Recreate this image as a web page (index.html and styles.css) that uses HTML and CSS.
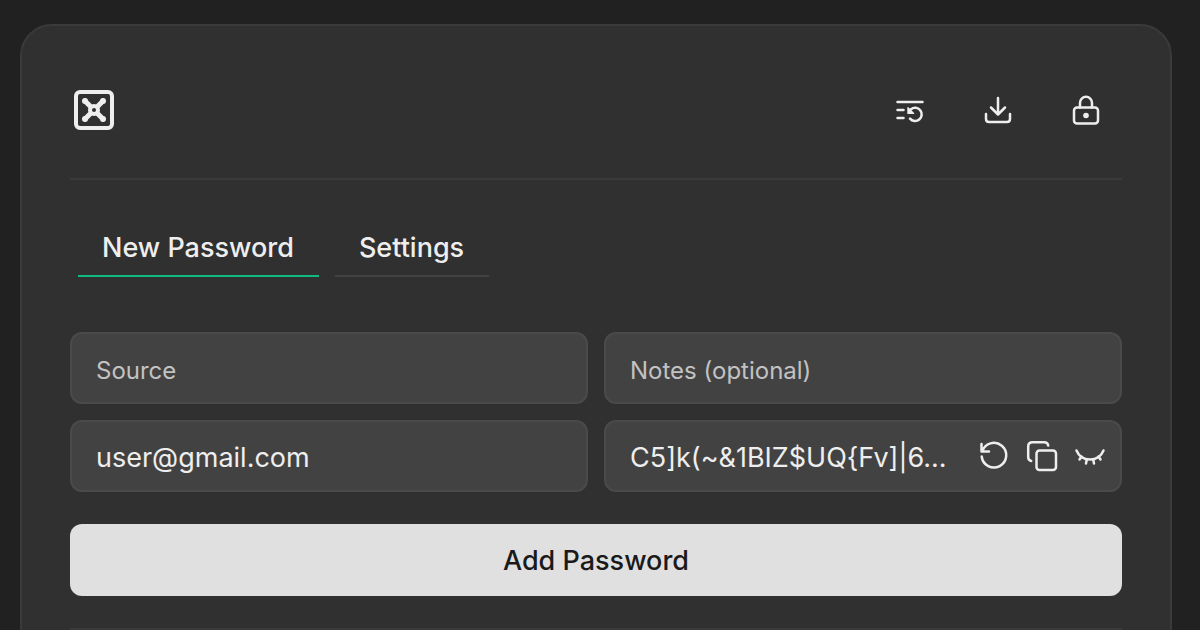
FILE: index.html
```html
<!DOCTYPE html>
<html lang="en">
<head>
<meta charset="utf-8">
<meta name="viewport" content="width=device-width, initial-scale=1">
<title>Password Manager</title>
<link rel="stylesheet" href="styles.css">
</head>
<body>
<main class="card">
  <header class="header">
    <svg class="logo" viewBox="0 0 40 40" aria-hidden="true">
      <rect x="2" y="2" width="36" height="36" rx="4" fill="none" stroke="currentColor" stroke-width="4"/>
      <path d="M11 11l18 18M29 11L11 29" fill="none" stroke="currentColor" stroke-width="5" stroke-linecap="round"/>
      <g fill="currentColor"><circle cx="11" cy="11" r="3"/><circle cx="29" cy="11" r="3"/><circle cx="11" cy="29" r="3"/><circle cx="29" cy="29" r="3"/><circle cx="20" cy="20" r="6"/></g>
      <circle class="logo-hole" cx="20" cy="20" r="2"/>
    </svg>
    <nav class="actions">
      <button class="action" type="button" aria-label="History">
        <svg class="icon" viewBox="0 0 32 32"><path d="M3.5 8h25M3.5 16h6M3.5 24h6"/><path d="M17 15.2A6.6 6.6 0 1 1 16 24.6"/><path d="M14 13.8v5.6h5.6z" fill="currentColor" stroke-width="1.4"/></svg>
      </button>
      <button class="action" type="button" aria-label="Download">
        <svg class="icon" viewBox="0 0 32 32"><path d="M16 4v16M9 13.500l7 7 7-7M4 20v5q0 3 3 3h18q3 0 3-3v-5"/></svg>
      </button>
      <button class="action" type="button" aria-label="Lock">
        <svg class="icon" viewBox="0 0 32 32"><rect x="4" y="13.500" width="24" height="16" rx="3"/><path d="M10 13.500V9a6 6.200 0 0 1 12 0v4.500"/><circle cx="16" cy="21.500" r="2.8" fill="currentColor" stroke="none"/></svg>
      </button>
    </nav>
  </header>

  <div class="tabs" role="tablist">
    <button class="tab tab-active" type="button" role="tab" aria-selected="true">New Password</button>
    <button class="tab" type="button" role="tab" aria-selected="false">Settings</button>
  </div>

  <form class="form">
    <div class="fields">
      <div class="field"><input class="input" type="text" placeholder="Source" aria-label="Source"></div>
      <div class="field"><input class="input" type="text" placeholder="Notes (optional)" aria-label="Notes"></div>
      <div class="field"><input class="input" type="text" value="user@gmail.com" aria-label="Username"></div>
      <div class="field field-password">
        <input class="input" type="text" value="C5]k(~&amp;1BIZ$UQ{Fv]|6..." aria-label="Password">
        <div class="tools">
          <button class="tool" type="button" aria-label="Regenerate">
            <svg class="icon" viewBox="0 0 32 32"><path d="M3.500 4v7.500h7.500M4.200 11.500A12.300 12.300 0 1 1 3.700 16.500"/></svg>
          </button>
          <button class="tool" type="button" aria-label="Copy">
            <svg class="icon" viewBox="0 0 32 32"><rect x="10.500" y="10.500" width="19.500" height="19.500" rx="3"/><path d="M5.200 21Q2.200 20.300 2.200 17V6.500q0-4.300 4.300-4.300h11.700q3.600 0 4 3.400"/></svg>
          </button>
          <button class="tool" type="button" aria-label="Show">
            <svg class="icon" viewBox="0 0 32 32"><path d="M2.500 10.500C5 16.500 9.500 19.500 16 19.500S27 16.500 29.500 10.500"/><path d="M7.500 16.500l-2 3M12.800 19.500l-.8 4M19.200 19.500l.8 4M24.500 16.500l2 3"/></svg>
          </button>
        </div>
      </div>
    </div>
    <button class="submit" type="button">Add Password</button>
  </form>

  <section class="list" aria-label="Saved passwords"></section>
</main>
</body>
</html>
```

FILE: styles.css
```css
* {
  box-sizing: border-box;
}

body {
  margin: 0;
  padding: 24px 28px 0 20px;
  height: 100vh;
  overflow: hidden;
  background: #212121;
  color: #eeeeee;
  font-family: Inter, "Liberation Sans", sans-serif;
  font-size: 27px;
}

button,
input {
  margin: 0;
  padding: 0;
  border: 0;
  background: none;
  color: inherit;
  font: inherit;
}

.card {
  min-height: 100vh;
  padding: 48px;
  border: 2px solid #3a3a3a;
  border-radius: 32px;
  background: #303030;
}

.header {
  display: flex;
  align-items: center;
  justify-content: space-between;
  padding: 0 0 32px 4px;
  border-bottom: 2px solid #3a3a3a;
}

.logo {
  width: 40px;
  height: 40px;
}

.logo-hole {
  fill: #303030;
}

.actions {
  display: flex;
  gap: 16px;
}

.action {
  display: grid;
  place-items: center;
  width: 72px;
  height: 72px;
}

.icon {
  display: block;
  width: 32px;
  height: 32px;
  fill: none;
  stroke: currentColor;
  stroke-width: 2.5;
  stroke-linecap: round;
  stroke-linejoin: round;
}

.tabs {
  display: flex;
  gap: 16px;
  padding: 40px 8px 0;
}

.tab {
  height: 57px;
  padding: 0 25px 0 24px;
  border-bottom: 2px solid #424242;
  font-weight: 500;
}

.tab-active {
  border-color: #10b981;
}

.form {
  padding: 55px 0 32px;
}

.fields {
  display: grid;
  grid-template-columns: repeat(2, minmax(0, 1fr));
  gap: 16px;
}

.field {
  display: flex;
  align-items: center;
  height: 72px;
  padding: 0 24px;
  border: 2px solid #4a4a4a;
  border-radius: 12px;
  background: #424242;
}

.field-password {
  gap: 16px;
  padding-right: 14px;
}

.input {
  flex: 1;
  min-width: 0;
  height: 100%;
  padding-top: 2px;
  outline: none;
  text-overflow: ellipsis;
}

.input::placeholder {
  color: #c2c2c2;
  font-size: 24px;
  opacity: 1;
}

.tools {
  display: flex;
  gap: 16px;
}

.submit {
  width: 100%;
  height: 72px;
  margin-top: 32px;
  border-radius: 12px;
  background: #e0e0e0;
  color: #1a1a1a;
  font-weight: 500;
}

.list {
  border-top: 2px solid #3a3a3a;
}
```
